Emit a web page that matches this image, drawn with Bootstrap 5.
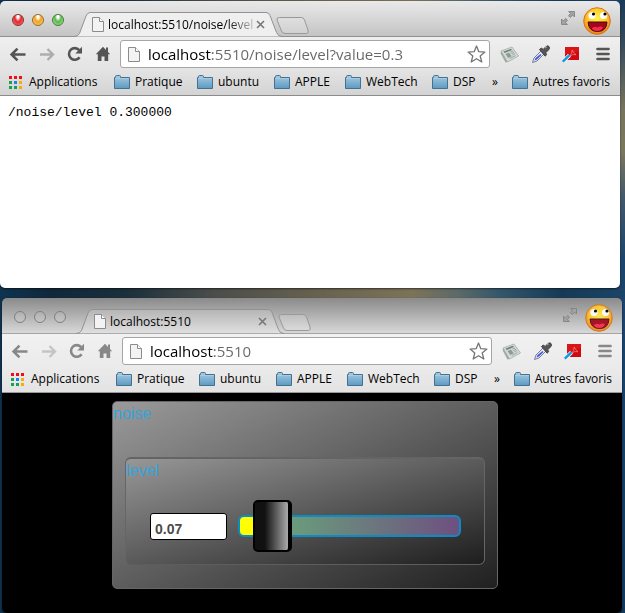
<!DOCTYPE html>
<html lang="fr">
<head>
<meta charset="utf-8">
<meta name="viewport" content="width=device-width, initial-scale=1">
<title>localhost:5510</title>
<link rel="stylesheet" href="https://cdn.jsdelivr.net/npm/bootstrap@5.3.0/dist/css/bootstrap.min.css">
<script defer src="https://cdn.jsdelivr.net/npm/bootstrap@5.3.0/dist/js/bootstrap.bundle.min.js"></script>
<style>
body{font-family:"Open Sans","Noto Sans",sans-serif;font-size:12px;line-height:16px;color:#000;min-height:100vh;
 background:linear-gradient(transparent 0 280px,#1c456c 320px,#123a5e) right/5px 100% no-repeat,
 linear-gradient(#1a3a58 0,#35495a 40px,#77745f 110px,#7b7860 150px,#41576a 200px,#1c456c 260px) right top/5px 280px no-repeat,
 linear-gradient(90deg,#0f3350 0,#10283a 8%,#1b2f3c 20%,#4a4d4a 34%,#66604f 50%,#7c7358 66%,#5d6a68 73%,#34566a 80%,#163a56 90%,#1c4468 100%)}
.desk{padding:1px 0 0}
.win{margin-right:5px;border-radius:5px;overflow:hidden;box-shadow:0 1px 2px #0008;--tab:#efefef;color:#555}
.win-b{margin:10px 3px 0 2px;--tab:#ffffff30;color:#888}
.strip{height:36px;padding:0 9px 0 12px;background:linear-gradient(#e9e9e9,#c4c4c4);border-bottom:1px solid #8f8f8f}
.win-b .strip{background:linear-gradient(#8a8a8a,#d8d8d8);border-color:#a4a4a4}
.lights{padding-top:9px}
.dot{width:12px;height:12px;padding:0;border:1px solid #5b2a26;border-radius:50%}
.dot-r{background:radial-gradient(ellipse at 50% 15%,#fff 0 12%,#e6232b 45%,#ff8d8a 100%);border-color:#8d2b2b}
.dot-y{background:radial-gradient(ellipse at 50% 15%,#fff 0 12%,#f0a020 45%,#ffe97d 100%);border-color:#96682a}
.dot-g{background:radial-gradient(ellipse at 50% 15%,#fff 0 12%,#58b548 45%,#c5f7a4 100%);border-color:#3f7a39}
.win-b .dot{background:#ffffff18;border-color:#808080}
.tabb{width:208px;height:25px;margin:0 0 -1px 10px;padding:0 17px 0 18px}
.tab-back{left:0;top:0;width:100%;height:100%}
.name{font-size:12px;line-height:24px;color:#000;white-space:nowrap}
.fade-end{-webkit-mask-image:linear-gradient(90deg,#000 82%,#0003)}
.bare{border:0;background:none;padding:0;display:block;line-height:0;flex:none;color:inherit}
.dim{opacity:.4}
.plus{margin-left:-6px;padding-top:16px}
.full{padding:10px 0 0}
.face{padding-top:6px}
.win-b .face{opacity:.92}
.bar{height:32px;padding:2px 10px 0 9px;background:linear-gradient(#efefef,#e4e4e4)}
.omni{height:28px;border:1px solid #a5a5a5;border-radius:3px;background:#fff;margin:0 10px 0 9px;padding:0 3px 0 7px;min-width:0}
.url{font-size:15px;line-height:24px;border:0;padding:0;outline:0;min-width:0;color:transparent;background:linear-gradient(90deg,#000 64px,#666 64px);-webkit-background-clip:text;background-clip:text}
.marks{display:grid;grid-template-columns:105px 83px 77px 71px 87px 60px 1fr auto;height:27px;padding:0 10px 0 9px;background:linear-gradient(#e4e4e4,#d3d3d3);border-bottom:1px solid #8b8b8b;align-items:center}
.win-b .bar{background:linear-gradient(#f1f1f1,#ebebeb)}
.win-b .marks{background:linear-gradient(#ebebeb,#e3e3e3);border-color:#999}
.marks a{color:#000;text-decoration:none;display:flex;align-items:center;gap:5px;white-space:nowrap}
.marks a.apps{gap:7px}
.reply{height:192px;background:#fff;margin:0;padding:9px 8px;font:13px/16px "Liberation Mono",monospace;color:#000}
.synth{background:#000;min-height:220px;padding:8px 0 0}
.g-outer{max-width:386px;height:188px;margin:0 auto 0 110px;border:1px solid #666;border-radius:5px;background:linear-gradient(154deg,#9a9a9a,#202020);color:#37a3da;font:16px/20px "Liberation Sans",sans-serif;padding:2px 12px 0 0}
.g-inner{height:108px;margin:33px 0 0 12px;border:1px solid #666;border-top:2px solid #646464;border-bottom-color:#5d5d5d;border-radius:6px;background:linear-gradient(164deg,#979797,#1e1e1e);padding:2px 0 0}
.numb{width:77px;height:27px;border:1px solid #000;outline:0;border-radius:3px;background:#fff;color:#4b4b4b;font:bold 14px/18px "Liberation Sans",sans-serif;padding:5px 0 0 4px}
.ctl{padding:19px 0 0 24px}
.slide{appearance:none;-webkit-appearance:none;width:223px;height:52px;margin:0 0 0 11px;background:none;flex:none}
.slide::-webkit-slider-runnable-track{height:22px;border:2px solid #0c8cc4;border-radius:6px;background:linear-gradient(90deg,#ff0 0 14px,#6a9c7c 50px,#6d5080)}
.slide::-webkit-slider-thumb{-webkit-appearance:none;width:39px;height:52px;margin-top:-17px;border:2px solid #000;border-right-width:4px;border-radius:5px;background:linear-gradient(90deg,#111 30%,#aaa)}
</style>
</head>
<body>
<svg class="position-absolute" width="0" height="0" aria-hidden="true">
<defs>
<linearGradient id="fo" x1="0" y1="0" x2="0" y2="1"><stop stop-color="#a6cbe2"/><stop offset="1" stop-color="#5d9ac2"/></linearGradient>
<radialGradient id="sm" cx=".5" cy=".4" r=".6"><stop stop-color="#fff04a"/><stop offset=".6" stop-color="#fdc92c"/><stop offset="1" stop-color="#ee7a12"/></radialGradient>
</defs>
<symbol id="page" viewBox="0 0 12 15"><path d="M.5.5h7l4 4v10H.5z" fill="#f3f3f3" stroke="#8c8c8c"/><path d="M7.500.5v4h4" fill="#fff" stroke="#8c8c8c"/></symbol>
<symbol id="folder" viewBox="0 0 16 14"><path d="M.5 13.500V2.500h1v-1q0-1 1-1h3q1 0 1 1v1h9v11z" fill="url(#fo)" stroke="#44718f"/><path d="M1 3.500h14" stroke="#a9cce2"/></symbol>
<symbol id="grid9" viewBox="0 0 13 13"><path d="M0 0h3v3H0zM5 0h3v3H5zM10 0h3v3h-3z" fill="#f00d16"/><path d="M0 5h3v3H0zM0 10h3v3H0zM5 10h3v3H5z" fill="#14a250"/><path d="M5 5h3v3H5z" fill="#1284f5"/><path d="M10 5h3v3h-3zM10 10h3v3h-3z" fill="#fbab07"/></symbol>
<symbol id="back" viewBox="0 0 16 14"><path d="M15 7H2.500M7.500 1.500 2 7l5.500 5.500" fill="none" stroke="currentColor" stroke-width="2.400"/></symbol>
<symbol id="fwd" viewBox="0 0 16 14"><path d="M1 7h12.500M8.500 1.500 14 7l-5.500 5.500" fill="none" stroke="currentColor" stroke-width="2.400"/></symbol>
<symbol id="reload" viewBox="0 0 16 16"><path d="M12.600 11.200a5.800 5.800 0 1 1-.4-7" fill="none" stroke="currentColor" stroke-width="2.600"/><path d="M15 .8v6.700H8.300z" fill="currentColor"/></symbol>
<symbol id="home" viewBox="0 0 16 16"><path d="M8 .8.8 8.200h2V15h3.700v-4.500h3V15h3.700V8.200h2L13 6V1.500h-2V4z" fill="currentColor"/></symbol>
<symbol id="star" viewBox="0 0 19 18"><path d="m9.500 1 2.300 5.700 6.100.4-4.700 3.900 1.600 6-5.300-3.300L4.200 17l1.600-6L1.100 7.100l6.100-.4z" fill="#fff" stroke="#767676" stroke-width="1.300" stroke-linejoin="round"/></symbol>
<symbol id="news" viewBox="0 0 19 17"><path d="m1 5 11-4 6.500 9-11 6z" fill="#d5dbd7" stroke="#a5ada8" stroke-width=".8"/><path d="m1 5 6.500 11-2 .5-4.800-9z" fill="#9da9a1"/><path d="m3.500 5.500 7.500-2.700 1 1.300-7.500 2.900z" fill="#6f8078"/><path d="m5.500 8 3.500-1.400 2.700 3.600-3.500 1.700z" fill="#8c9c94"/><path d="m10.200 6.200 3-1.300m-2 2.700 3-1.500m-2 2.900 3-1.500m-5.400 5 5.600-2.900" stroke="#8c9a93" stroke-width=".8"/></symbol>
<symbol id="drop" viewBox="0 0 19 19"><path d="M1.500 17.500 3 13l7.500-7.500 3 3L6 16z" fill="#e7eaf8" stroke="#797d90"/><path d="m3.500 15.500 1-2.500 5-4 1 1L6 14.500z" fill="#4057e0"/><path d="m8.500 4.500 1.700-1.400 2 1.300L15 1.500Q17 .2 18 1.500t0 3l-3.300 3.200 1 2-1.700 1.500z" fill="#555" stroke="#444"/><path d="m14 3 2-1.200" stroke="#aaa"/></symbol>
<symbol id="pdf" viewBox="0 0 18 17"><path d="M3 1h14v13H3z" fill="#d00811"/><path d="M3 1h14v4L3 9z" fill="#d91518"/><path d="M10.200 4q1.300 3 3.800 4.700-3.500-.8-6 1.300 2.300-2.500 2.200-6" fill="none" stroke="#ff9d98" stroke-width=".6"/><path d="m.8 15.700 6.700-6.500" stroke="#eaf8ff" stroke-width="4"/><path d="m.8 15.700 6.700-6.500" stroke="#1898dc" stroke-width="2.500"/></symbol>
<symbol id="menu" viewBox="0 0 14 14"><path d="M1.500 2h11m-11 5h11m-11 5h11" stroke="currentColor" stroke-width="2.700" stroke-linecap="round"/></symbol>
<symbol id="full" viewBox="0 0 14 14"><path d="M7.500.5h6V6l-1.800-1.800L9.200 6.500 7.500 4.800 9.600 2.300zM6.500 13.500h-6V8l1.800 1.800L4.800 7.500l1.700 1.700-2.100 2.500z" fill="#a2a2a2" stroke="#7d7d7d" stroke-width=".8"/></symbol>
<symbol id="face" viewBox="0 0 28 28"><circle cx="14" cy="14" r="13.300" fill="url(#sm)" stroke="#d87320"/><ellipse cx="9" cy="8.500" rx="3.600" ry="3.600" fill="#fff"/><ellipse cx="20.500" cy="8.500" rx="3.600" ry="3.600" fill="#fff"/><circle cx="10.500" cy="7" r="1.600"/><circle cx="22" cy="7" r="1.600"/><path d="M5 15h19q-.5 9.500-9.500 9.500T5 15z" fill="#a3071b" stroke="#4b0810"/><path d="M8.500 21.500q3-3 6-1 3-2 5.500 0-2 3.500-5.500 3.500t-6-2.500z" fill="#f42b4c"/></symbol>
<symbol id="shape" viewBox="0 0 208 25"><path d="M0 24.500q4 0 5.500-3L12 4q1.500-3.500 4-3.500h176q3 0 4 3l6.500 17q1.500 4 5.500 4z" fill="var(--tab)"/><path d="M0 24.500q4 0 5.500-3L12 4q1.500-3.500 4-3.500h176q3 0 4 3l6.500 17q1.500 4 5.500 4" fill="none" stroke="#929292"/></symbol>
<symbol id="newtab" viewBox="0 0 33 17"><path d="M3.500.5h22q2 0 3 2.500l3.500 10q1 3.500-1.500 3.500H9q-2.500 0-3.500-2.500L1 3Q.3.500 3.500.5z" fill="#ffffff30" stroke="#999"/></symbol>
<symbol id="cross" viewBox="0 0 9 9"><path d="m1 1 7 7m0-7L1 8" stroke="#777" stroke-width="1.600"/></symbol>
</svg>

<main class="desk">
<section class="win">
 <header class="strip d-flex align-items-start">
  <div class="lights d-flex gap-2"><button class="dot dot-r mt-1" aria-label="Fermer"></button><button class="dot dot-y mt-1" aria-label="Réduire"></button><button class="dot dot-g mt-1" aria-label="Agrandir"></button></div>
  <div class="tabb position-relative d-flex align-items-center align-self-end">
   <svg class="tab-back position-absolute" preserveAspectRatio="none"><use href="#shape"/></svg>
   <svg class="position-relative flex-shrink-0" width="12" height="15"><use href="#page"/></svg>
   <span class="name fade-end position-relative ms-1 me-auto">localhost:5510/noise/level</span>
   <button class="bare position-relative" aria-label="Fermer l’onglet"><svg width="9" height="9"><use href="#cross"/></svg></button>
  </div>
  <button class="bare plus" aria-label="Nouvel onglet"><svg width="33" height="17"><use href="#newtab"/></svg></button>
  <button class="bare full ms-auto me-2" aria-label="Plein écran"><svg width="14" height="14"><use href="#full"/></svg></button>
  <button class="bare face" aria-label="Profil"><svg width="28" height="28"><use href="#face"/></svg></button>
 </header>
 <nav class="bar d-flex align-items-center">
  <button class="bare" aria-label="Retour"><svg width="18" height="15"><use href="#back"/></svg></button>
  <button class="bare dim ms-2 ps-1" aria-label="Avancer"><svg width="16" height="15"><use href="#fwd"/></svg></button>
  <button class="bare ms-2 ps-1" aria-label="Recharger"><svg width="16" height="16"><use href="#reload"/></svg></button>
  <button class="bare ms-2 ps-1" aria-label="Accueil"><svg width="16" height="16"><use href="#home"/></svg></button>
  <div class="omni d-flex align-items-center flex-fill"><svg class="flex-shrink-0 me-2" width="12" height="15"><use href="#page"/></svg>
   <input class="url flex-fill" type="text" aria-label="Adresse" value="localhost:5510/noise/level?value=0.3">
   <button class="bare" aria-label="Favori"><svg width="19" height="18"><use href="#star"/></svg></button></div>
  <button class="bare" aria-label="Actualités"><svg width="19" height="17"><use href="#news"/></svg></button>
  <button class="bare ms-2 ps-1" aria-label="Pipette"><svg width="19" height="19"><use href="#drop"/></svg></button>
  <button class="bare ms-2 ps-1" aria-label="PDF"><svg width="18" height="17"><use href="#pdf"/></svg></button>
  <button class="bare ms-3" aria-label="Menu"><svg width="14" height="14"><use href="#menu"/></svg></button>
 </nav>
 <nav class="marks">
  <a class="apps" href="#"><svg width="13" height="13"><use href="#grid9"/></svg>Applications</a>
  <a href="#"><svg width="16" height="14"><use href="#folder"/></svg>Pratique</a>
  <a href="#"><svg width="16" height="14"><use href="#folder"/></svg>ubuntu</a>
  <a href="#"><svg width="16" height="14"><use href="#folder"/></svg>APPLE</a>
  <a href="#"><svg width="16" height="14"><use href="#folder"/></svg>WebTech</a>
  <a href="#"><svg width="16" height="14"><use href="#folder"/></svg>DSP</a>
  <a href="#">»</a>
  <a href="#"><svg width="16" height="14"><use href="#folder"/></svg>Autres favoris</a>
 </nav>
 <pre class="reply">/noise/level 0.300000</pre>
</section>

<section class="win win-b">
 <header class="strip d-flex align-items-start">
  <div class="lights d-flex gap-2"><button class="dot mt-1" aria-label="Fermer"></button><button class="dot mt-1" aria-label="Réduire"></button><button class="dot mt-1" aria-label="Agrandir"></button></div>
  <div class="tabb position-relative d-flex align-items-center align-self-end">
   <svg class="tab-back position-absolute" preserveAspectRatio="none"><use href="#shape"/></svg>
   <svg class="position-relative flex-shrink-0" width="12" height="15"><use href="#page"/></svg>
   <span class="name position-relative ms-1 me-auto">localhost:5510</span>
   <button class="bare position-relative" aria-label="Fermer l’onglet"><svg width="9" height="9"><use href="#cross"/></svg></button>
  </div>
  <button class="bare plus" aria-label="Nouvel onglet"><svg width="33" height="17"><use href="#newtab"/></svg></button>
  <button class="bare full ms-auto me-2" aria-label="Plein écran"><svg width="14" height="14"><use href="#full"/></svg></button>
  <button class="bare face" aria-label="Profil"><svg width="28" height="28"><use href="#face"/></svg></button>
 </header>
 <nav class="bar d-flex align-items-center">
  <button class="bare" aria-label="Retour"><svg width="18" height="15"><use href="#back"/></svg></button>
  <button class="bare dim ms-2 ps-1" aria-label="Avancer"><svg width="16" height="15"><use href="#fwd"/></svg></button>
  <button class="bare ms-2 ps-1" aria-label="Recharger"><svg width="16" height="16"><use href="#reload"/></svg></button>
  <button class="bare ms-2 ps-1" aria-label="Accueil"><svg width="16" height="16"><use href="#home"/></svg></button>
  <div class="omni d-flex align-items-center flex-fill"><svg class="flex-shrink-0 me-2" width="12" height="15"><use href="#page"/></svg>
   <input class="url flex-fill" type="text" aria-label="Adresse" value="localhost:5510">
   <button class="bare" aria-label="Favori"><svg width="19" height="18"><use href="#star"/></svg></button></div>
  <button class="bare" aria-label="Actualités"><svg width="19" height="17"><use href="#news"/></svg></button>
  <button class="bare ms-2 ps-1" aria-label="Pipette"><svg width="19" height="19"><use href="#drop"/></svg></button>
  <button class="bare ms-2 ps-1" aria-label="PDF"><svg width="18" height="17"><use href="#pdf"/></svg></button>
  <button class="bare ms-3" aria-label="Menu"><svg width="14" height="14"><use href="#menu"/></svg></button>
 </nav>
 <nav class="marks">
  <a class="apps" href="#"><svg width="13" height="13"><use href="#grid9"/></svg>Applications</a>
  <a href="#"><svg width="16" height="14"><use href="#folder"/></svg>Pratique</a>
  <a href="#"><svg width="16" height="14"><use href="#folder"/></svg>ubuntu</a>
  <a href="#"><svg width="16" height="14"><use href="#folder"/></svg>APPLE</a>
  <a href="#"><svg width="16" height="14"><use href="#folder"/></svg>WebTech</a>
  <a href="#"><svg width="16" height="14"><use href="#folder"/></svg>DSP</a>
  <a href="#">»</a>
  <a href="#"><svg width="16" height="14"><use href="#folder"/></svg>Autres favoris</a>
 </nav>
 <div class="synth">
  <div class="g-outer">
   <div>noise</div>
   <div class="g-inner">
    <label class="d-block" for="level">level</label>
    <div class="ctl d-flex align-items-center">
     <input class="numb" type="text" value="0.07" aria-label="Valeur de level">
     <input class="slide" id="level" type="range" min="0" max="1" step="0.01" value="0.07">
    </div>
   </div>
  </div>
 </div>
</section>
</main>
</body>
</html>
